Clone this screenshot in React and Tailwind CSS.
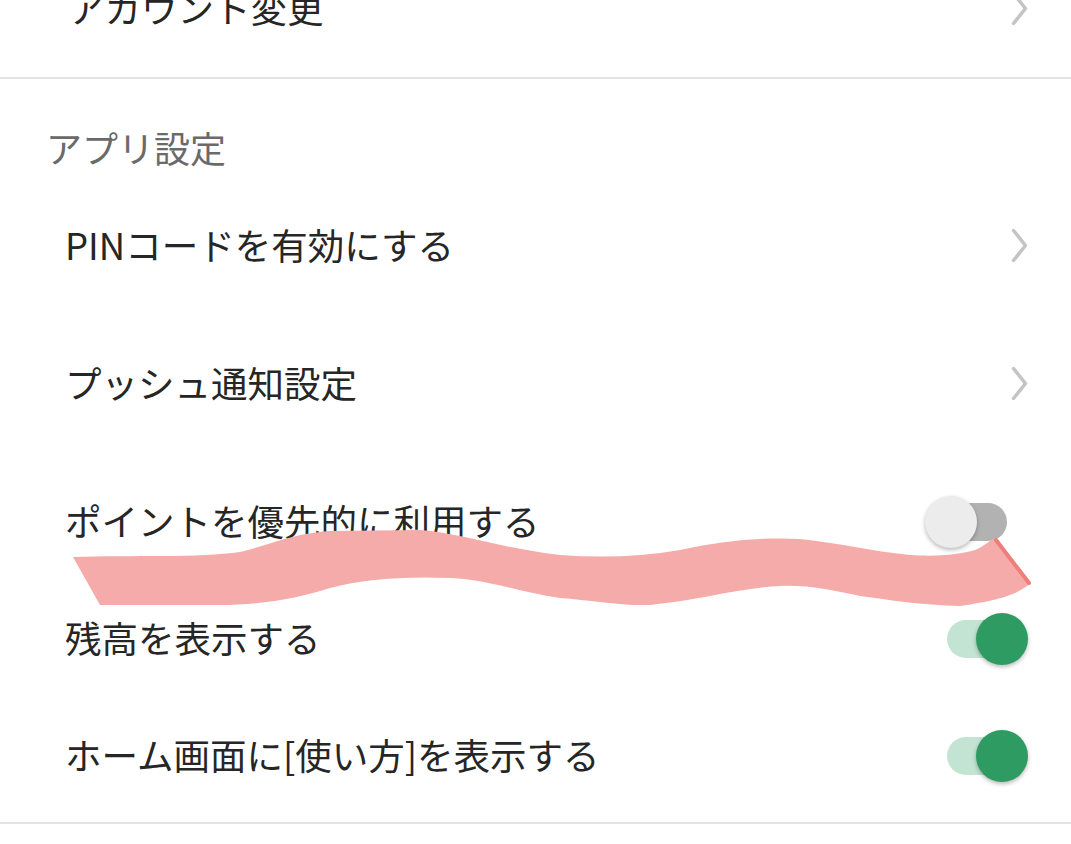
import React from "react";

const Chevron = () => (
  <svg width="17" height="35" viewBox="0 0 17 35" fill="none">
    <path d="M2.5 2.5 L14.5 17.5 L2.5 32.5" stroke="#c4c4c4" strokeWidth="3.5" strokeLinecap="round" strokeLinejoin="round" />
  </svg>
);

function Toggle({ on }) {
  return (
    <div className="relative w-[103px] h-[52px]">
      <div className={on ? "absolute left-[22px] top-[7px] w-[60px] h-[38px] rounded-full bg-[#c3e4d2]" : "absolute left-[22px] top-[7px] w-[60px] h-[38px] rounded-full bg-[#b2b2b2]"} />
      <div className={on ? "absolute top-0 right-0 w-[52px] h-[52px] rounded-full bg-[#2e9c62] shadow-[0_2px_4px_rgba(0,0,0,0.28)]" : "absolute top-0 left-0 w-[52px] h-[52px] rounded-full bg-[#ececec] shadow-[0_2px_4px_rgba(0,0,0,0.28)]"} />
    </div>
  );
}

function LinkRow({ label, h, first }) {
  return (
    <div className={`flex items-center justify-between pl-[65px] pr-[43px] ${h}`}>
      <span className={first ? "pl-[3px] text-[36.5px] leading-none text-[#262626]" : "text-[36.5px] leading-none text-[#262626]"}>{label}</span>
      <Chevron />
    </div>
  );
}

function SwitchRow({ label, on }) {
  return (
    <div className="flex items-center justify-between pl-[65px] pr-[43px] h-[117px]">
      <span className="text-[36.5px] leading-none text-[#262626]">{label}</span>
      <Toggle on={on} />
    </div>
  );
}

export default function App() {
  return (
    <div className="relative w-full h-[844px] overflow-hidden bg-white font-['Noto_Sans_CJK_JP','Noto_Sans',sans-serif]">
      <div className="-mt-[61px] flex items-center justify-between pl-[68px] pr-[43px] h-[138px]">
        <span className="text-[36.5px] leading-none text-[#262626]">アカウント変更</span>
        <Chevron />
      </div>
      <div className="h-[2px] bg-[#e3e3e3]" />
      <div className="h-[98px] pt-[50px] pl-[46px]">
        <span className="text-[36px] leading-none text-[#6a6a6a]">アプリ設定</span>
      </div>
      <LinkRow label="PINコードを有効にする" h="h-[137px]" />
      <LinkRow label="プッシュ通知設定" h="h-[138px]" />
      <div className="pt-[11px] pb-[8px]">
        <SwitchRow label="ポイントを優先的に利用する" on={false} />
        <SwitchRow label="残高を表示する" on={true} />
        <SwitchRow label="ホーム画面に[使い方]を表示する" on={true} />
      </div>
      <div className="h-[2px] bg-[#e3e3e3]" />

      <svg className="absolute left-0 top-0 pointer-events-none" width="1071" height="844" viewBox="0 0 1071 844">
        <path
          d="M73,557 C130,555 200,558 240,552 C270,545 290,534 330,531 L420,530 C460,533 500,548 560,555 C600,558 640,557 680,550 C720,541 760,537 800,539 C840,543 870,551 910,555 C940,557 960,554 975,550 C985,546 990,540 995,538 L1030,584 C1015,595 1000,600 960,606 C920,605 890,600 860,596 C830,590 810,585 780,586 C740,588 700,600 650,605 C620,606 590,600 560,598 C520,592 490,580 450,578 C400,576 360,580 330,588 C300,598 260,605 220,605 L100,605 Z"
          fill="#f4abaa"
        />
        <path d="M996,540 L1029,583" stroke="#ee7e7a" strokeWidth="4" strokeLinecap="round" />
      </svg>
    </div>
  );
}
